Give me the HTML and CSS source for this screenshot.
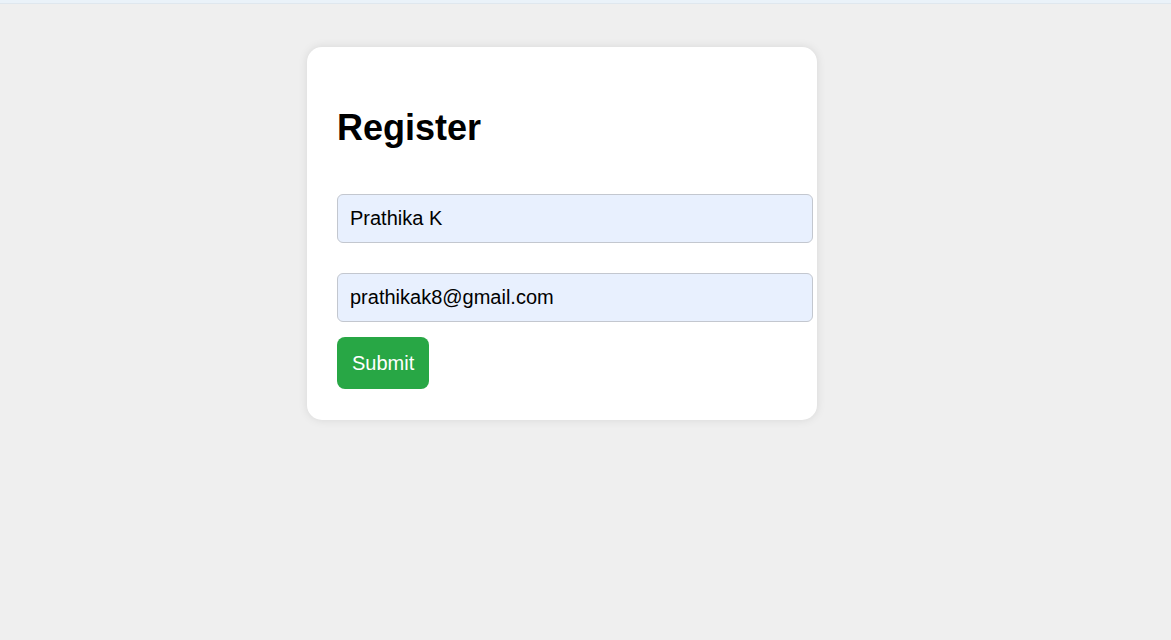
FILE: index.html
```html
<!DOCTYPE html>
<html lang="en">
<head>
<meta charset="utf-8">
<title>Register</title>
<link rel="stylesheet" href="styles.css">
</head>
<body>
<div class="topbar"></div>
<main class="page">
  <form class="card">
    <h1 class="title">Register</h1>
    <input class="field" type="text" value="Prathika K">
    <input class="field field-email" type="email" value="prathikak8@gmail.com">
    <button class="submit" type="button">Submit</button>
  </form>
</main>
</body>
</html>
```
FILE: styles.css
```css
html, body {
  margin: 0;
  padding: 0;
  background: #efefef;
  font-family: "Liberation Sans", Arial, sans-serif;
  height: 100%;
}
.topbar {
  height: 3px;
  background: #eaf2f9;
  border-bottom: 1px solid #dfe7ee;
}
.page {
  display: flex;
  padding: 43px 0 0 307px;
}
.card {
  width: 450px;
  padding: 0 30px 31px;
  background: #fff;
  border-radius: 15px;
  box-shadow: 0 0 10px rgba(0, 0, 0, 0.1);
  display: flex;
  flex-direction: column;
  align-items: flex-start;
}
.title {
  margin: 60px 0 46px;
  font-size: 36px;
  line-height: 41px;
  font-weight: bold;
  color: #000;
}
.field {
  width: 100%;
  margin: 0;
  padding: 12px;
  border: 1px solid #c3c7cf;
  border-radius: 6px;
  background: #e8f0fe;
  font-family: "Liberation Sans", Arial, sans-serif;
  font-size: 20px;
  line-height: 23px;
  color: #000;
  outline: none;
}
.field-email {
  margin-top: 30px;
}
.submit {
  margin-top: 15px;
  padding: 14px 15px;
  border: none;
  border-radius: 8px;
  background: #28a745;
  color: #fff;
  font-family: "Liberation Sans", Arial, sans-serif;
  font-size: 20px;
  line-height: 24px;
  cursor: pointer;
}
```
